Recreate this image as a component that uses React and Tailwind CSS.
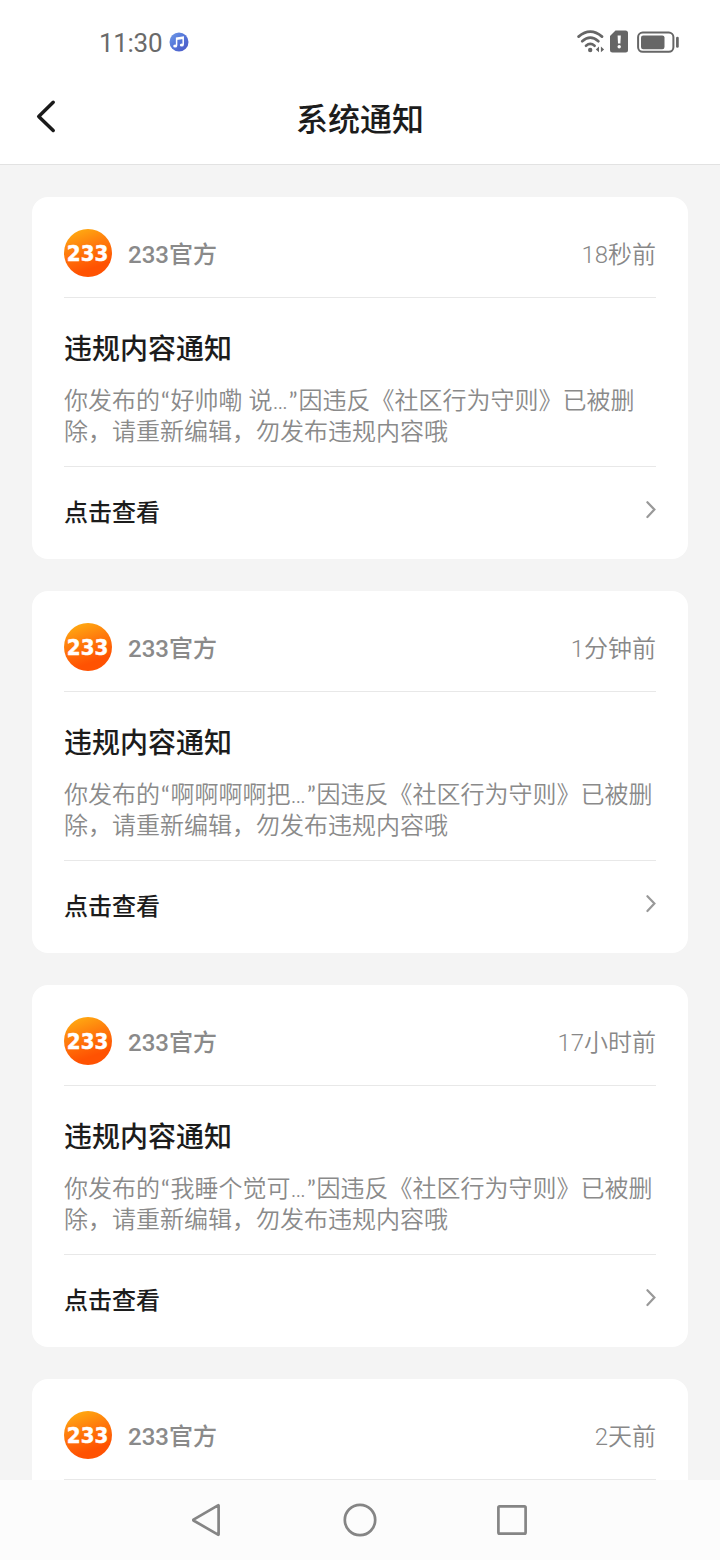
const notices = [
  { time: '18秒前', excerpt: '好帅嘞 说' },
  { time: '1分钟前', excerpt: '啊啊啊啊把' },
  { time: '17小时前', excerpt: '我睡个觉可' },
  { time: '2天前', excerpt: null },
];

function MusicBadge() {
  return (
    <svg className="ml-2 h-5 w-5" viewBox="0 0 20 20" fill="none">
      <defs>
        <linearGradient id="music" x1="0" y1="0" x2="1" y2="1">
          <stop offset="0" stopColor="#6f9be8" />
          <stop offset="0.5" stopColor="#5474d8" />
          <stop offset="1" stopColor="#4a55c4" />
        </linearGradient>
      </defs>
      <circle cx="10" cy="10" r="9.5" fill="url(#music)" />
      <path d="M7.6 13.8V6.2L14.2 5.2V12.8M7.6 7.2L14.2 6.2" stroke="#fff" strokeWidth="1.5" />
      <ellipse cx="6.2" cy="14" rx="2" ry="1.6" fill="#fff" />
      <ellipse cx="12.8" cy="13" rx="2" ry="1.6" fill="#fff" />
    </svg>
  );
}

function StatusIcons() {
  return (
    <svg className="h-[26px] w-[104px]" viewBox="576 28.6 104 26" fill="none">
      <g stroke="#666" strokeWidth="2.7" strokeLinecap="round">
        <path d="M578.6 36.2Q590.3 26.2 602 36.2" />
        <path d="M582.2 40.8Q590.3 33.8 598.4 40.8" />
        <path d="M586 45.3Q590.3 41.8 594.6 45.3" />
      </g>
      <circle cx="590.2" cy="49.6" r="2.2" fill="#666" />
      <path d="M599 46.2V51.8L595.8 49ZM600.9 46.2V51.8L604.1 49Z" fill="#666" />
      <path d="M615.5 30H625.5Q628 30 628 32.5V49.5Q628 52 625.5 52H612.5Q610 52 610 49.5V35.5Z" fill="#666" />
      <path d="M617.6 35.2H620.8L620.4 43.2H618Z" fill="#fff" />
      <circle cx="619.2" cy="46.4" r="1.7" fill="#fff" />
      <rect x="638.1" y="32.1" width="35.3" height="19.3" rx="4.6" stroke="#666" strokeWidth="2" />
      <rect x="641" y="35" width="23.5" height="13.8" rx="2.2" fill="#666" />
      <path d="M677.4 37.7V46" stroke="#666" strokeWidth="2.7" strokeLinecap="round" />
    </svg>
  );
}

function Avatar() {
  return (
    <svg className="h-12 w-12" viewBox="0 0 48 48">
      <defs>
        <linearGradient id="orange" x1="0.2" y1="0" x2="0.5" y2="0.85">
          <stop offset="0" stopColor="#ffae12" />
          <stop offset="0.5" stopColor="#ff7a0c" />
          <stop offset="1" stopColor="#ff5202" />
        </linearGradient>
      </defs>
      <circle cx="24" cy="24" r="24" fill="url(#orange)" />
      <text
        x="2.8"
        y="31.5"
        textLength="41.5"
        lengthAdjust="spacingAndGlyphs"
        className="fill-white stroke-white font-['DejaVu_Sans'] text-[21px] font-bold"
        strokeWidth="0.5"
      >
        233
      </text>
    </svg>
  );
}

function Quote({ children }) {
  return <span className="inline-block w-[10.6px] text-center font-['Lato'] leading-none font-normal">{children}</span>;
}

function NoticeCard({ time, excerpt }) {
  return (
    <article className="h-[362px] shrink-0 rounded-2xl bg-white px-8">
      <div className="flex h-[101px] items-center border-b border-[#e8e8e8] pt-3">
        <Avatar />
        <span className="ml-4 pt-1 text-[24px] leading-8 font-medium text-[#8a8a8a]">233官方</span>
        <span className="ml-auto pt-1 text-[24px] leading-8 font-[350] text-[#888]">{time}</span>
      </div>
      {excerpt && (
        <>
          <div className="h-[169px] border-b border-[#e8e8e8] pt-8">
            <h2 className="text-[28px] leading-10 font-medium text-[#1c1c1c]">违规内容通知</h2>
            <p className="mt-4 text-[24px] leading-[31px] font-[350] whitespace-nowrap text-[#8a8a8a]">
              你发布的<Quote>“</Quote>{excerpt}…<Quote>”</Quote>因违反《社区行为守则》已被删
              <br />
              除，请重新编辑，勿发布违规内容哦
            </p>
          </div>
          <div className="flex h-[92px] items-center justify-between">
            <span className="text-[24px] leading-8 font-medium text-[#1c1c1c]">点击查看</span>
            <svg className="mb-1.5 h-5 w-3" viewBox="0 0 12 20" fill="none">
              <path d="M3.4 2.2L10.4 9.6L3.4 17" stroke="#999" strokeWidth="2.2" strokeLinecap="round" />
            </svg>
          </div>
        </>
      )}
    </article>
  );
}

export default function App() {
  return (
    <div className="flex h-[1560px] w-[720px] flex-col overflow-hidden bg-[#f4f4f4] font-['Roboto','Noto_Sans_CJK_SC',sans-serif]">
      <div className="flex h-20 shrink-0 items-center bg-white pt-1 pr-10 pl-[99px]">
        <span className="w-[62px] pt-0.5 text-[26px] leading-8 font-normal tracking-[-0.3px] text-[#6a6a6a]">11:30</span>
        <MusicBadge />
        <div className="ml-auto flex">
          <StatusIcons />
        </div>
      </div>
      <header className="grid h-[85px] shrink-0 grid-cols-[80px_1fr_80px] items-center border-b border-[#e2e2e2] bg-white pb-[5px]">
        <svg className="mb-2 ml-[34px] h-9 w-6" viewBox="0 0 24 36" fill="none">
          <path d="M19.2 4.3L4.7 18.4L19.2 32.5" stroke="#1a1a1a" strokeWidth="3.5" strokeLinecap="round" strokeLinejoin="round" />
        </svg>
        <h1 className="text-center text-[32px] leading-10 font-medium text-[#1c1c1c]">系统通知</h1>
      </header>
      <main className="flex min-h-0 flex-1 flex-col gap-8 overflow-hidden px-8 pt-8">
        {notices.map((notice) => (
          <NoticeCard key={notice.time} {...notice} />
        ))}
      </main>
      <nav className="flex h-20 shrink-0 items-center justify-center gap-[116px] bg-[#fcfcfc]">
        <svg className="h-9 w-9" viewBox="-2 0 36 36" fill="none" stroke="#858585" strokeWidth="2.7" strokeLinejoin="round">
          <path d="M26.6 3.5V32.5Q26.6 33 26 32.6L1.5 18.5Q1 18 1.5 17.6L26 3.4Q26.6 3 26.6 3.5Z" />
        </svg>
        <svg className="h-9 w-9" viewBox="0 0 36 36" fill="none" stroke="#858585" strokeWidth="2.7">
          <circle cx="18" cy="18" r="15.2" />
        </svg>
        <svg className="h-9 w-9" viewBox="0 0 36 36" fill="none" stroke="#858585" strokeWidth="2.7">
          <rect x="4.4" y="4.4" width="27.2" height="27.2" rx="1.2" />
        </svg>
      </nav>
    </div>
  );
}
